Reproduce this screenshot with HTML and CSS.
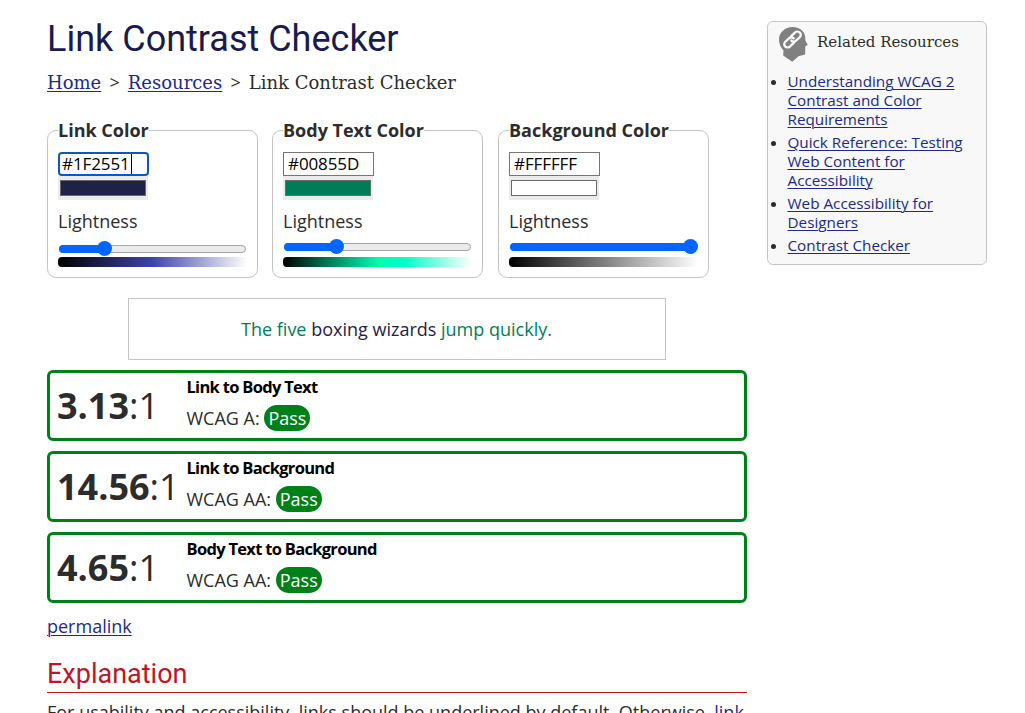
FILE: index.html
```html
<!DOCTYPE html>
<html lang="en">
<head>
<meta charset="utf-8">
<title>Link Contrast Checker</title>
<link rel="stylesheet" href="styles.css">
</head>
<body>
<div class="page">
  <main class="main">
    <h1>Link Contrast Checker</h1>
    <nav class="crumbs"><a href="#">Home</a> <span class="sep">&gt;</span> <a href="#">Resources</a> <span class="sep">&gt;</span> Link Contrast Checker</nav>

    <div class="pickers">
      <fieldset class="picker link">
        <legend>Link Color</legend>
        <div class="hex focused"><span>#1F2551</span><i class="caret"></i></div>
        <div class="well"><div class="swatch"></div></div>
        <div class="label">Lightness</div>
        <div class="slider"><div class="fill"></div><div class="thumb"></div></div>
        <div class="ramp"></div>
      </fieldset>
      <fieldset class="picker text">
        <legend>Body Text Color</legend>
        <div class="hex"><span>#00855D</span></div>
        <div class="well"><div class="swatch"></div></div>
        <div class="label">Lightness</div>
        <div class="slider"><div class="fill"></div><div class="thumb"></div></div>
        <div class="ramp"></div>
      </fieldset>
      <fieldset class="picker back">
        <legend>Background Color</legend>
        <div class="hex"><span>#FFFFFF</span></div>
        <div class="well"><div class="swatch"></div></div>
        <div class="label">Lightness</div>
        <div class="slider"><div class="fill"></div><div class="thumb"></div></div>
        <div class="ramp"></div>
      </fieldset>
    </div>

    <div class="sample"><span>The five <b>boxing wizards</b> jump quickly.</span></div>

    <div class="results">
      <section class="result">
        <div class="ratio"><span><b>3.13</b>:1</span></div>
        <div><h3>Link to Body Text</h3><p>WCAG A: <span class="pass">Pass</span></p></div>
      </section>
      <section class="result">
        <div class="ratio"><span><b>14.56</b>:1</span></div>
        <div><h3>Link to Background</h3><p>WCAG AA: <span class="pass">Pass</span></p></div>
      </section>
      <section class="result">
        <div class="ratio"><span><b>4.65</b>:1</span></div>
        <div><h3>Body Text to Background</h3><p>WCAG AA: <span class="pass">Pass</span></p></div>
      </section>
    </div>

    <div class="perma"><a href="#">permalink</a></div>
    <h2>Explanation</h2>
    <p class="explain">For usability and accessibility, links should be underlined by default. Otherwise, <a href="#">link</a></p>
  </main>

  <aside class="related">
    <div class="related-head">
      <svg width="29" height="35" viewBox="0 0 29 35">
        <path fill="#808080" d="M13.5 0C20 0 25.2 3.600 26.200 9.500L26.400 13.500L28.800 18L26.300 19.300L26.100 27.500L19.500 29.200L13.300 34.700L4.200 28.500L4.500 23.500C1.600 20.500 0 16.500 0 12.500C0 5.500 6 0 13.500 0Z"/>
        <g transform="translate(13.500 12.500) rotate(-43)" fill="none" stroke="#f8f8f8" stroke-width="2.300" stroke-linecap="round">
          <path d="M-1 3.300H-6.800A3.300 3.300 0 0 1 -6.800 -3.300H-1.800A3.300 3.300 0 0 1 1.600 0"/>
          <path d="M1 -3.300H6.800A3.300 3.300 0 0 1 6.800 3.300H1.800A3.300 3.300 0 0 1 -1.600 0"/>
        </g>
      </svg>
      <span>Related Resources</span>
    </div>
    <ul>
      <li><a href="#">Understanding WCAG 2<br>Contrast and Color<br>Requirements</a></li>
      <li><a href="#">Quick Reference: Testing<br>Web Content for<br>Accessibility</a></li>
      <li><a href="#">Web Accessibility for<br>Designers</a></li>
      <li><a href="#">Contrast Checker</a></li>
    </ul>
  </aside>
</div>
</body>
</html>
```
FILE: styles.css
```css
* { box-sizing: border-box; }
body { margin: 0; background: #fff; color: #2c2c2c; font: 18px/24px "Open Sans", sans-serif; height: 713px; overflow: hidden; }
a { color: #1b2a8c; text-decoration-thickness: 1px; text-underline-offset: 2px; }
h1, h2, h3, p { margin: 0; }
.page { display: flex; gap: 20px; padding: 16px 0 0 47px; align-items: flex-start; white-space: nowrap; }
.main { width: 700px; }
h1 { padding-top: 1px; font: 400 36px/44px Roboto, sans-serif; color: #1a1a4e; }
.crumbs { height: 24px; margin-top: 10px; font: 18px/24px "DejaVu Serif", serif; }
.crumbs .sep { margin: 0 2.400px; font-family: "Open Sans", sans-serif; line-height: 18px; }
.pickers { display: flex; gap: 14.500px; margin-top: 25px; }
.picker { width: 211px; height: 158px; margin: 0; padding: 0 10px; border: 1px solid #c4c4c4; border-radius: 9px; min-width: 0; }
.picker.text { margin: 0 .5px 0 -.5px; }
legend { padding: 0; font-weight: 700; line-height: 20px; }
.hex { display: flex; align-items: center; width: 91px; height: 24px; margin-top: 12px; padding-left: 4px; border: 1px solid #767676; font: 17px/20px "Open Sans", sans-serif; letter-spacing: -.1px; color: #000; }
.focused { border: 2px solid #0b57c4; border-radius: 4px; padding-left: 2px; }
.caret { width: 1px; height: 20px; margin-left: 1px; background: #000; }
.well { width: 90px; height: 24px; padding: 4px 2px; background: #ebebeb; }
.swatch { height: 16px; border: 1px solid #6a6a6a; }
.label { margin-top: 9px; line-height: 24px; }
.slider { position: relative; width: 187px; height: 8px; margin: 10px 0 0 1px; border: 1px solid #a5a5a5; border-radius: 4px; background: #ebebeb; }
.fill { height: 8px; margin: -1px; border-radius: 4px; background: #06f; }
.thumb { position: absolute; top: -5px; width: 15px; height: 15px; border-radius: 50%; background: #06f; }
.ramp { height: 10px; margin-top: 6px; border-radius: 4px; }
.link .swatch { background: #1f2147; }
.link .slider { margin-top: 12px; }
.link .ramp { margin-top: 4px; background: linear-gradient(90deg, #000, #3d44a8 50%, #fff); }
.link .fill { width: 45px; }
.link .thumb { left: 37px; }
.text .swatch { background: #007d58; }
.text .ramp { background: linear-gradient(90deg, #000, #00855d 26%, #00ffb2 51%, #00ffc8 64%, #fff); }
.text .fill { width: 52px; }
.text .thumb { left: 44px; }
.back .swatch { background: #fff; }
.back .ramp { background: linear-gradient(90deg, #000, #fff); }
.back .fill { width: 187px; }
.back .thumb { left: 172px; }
.sample { display: flex; align-items: center; justify-content: center; width: 538px; height: 62px; margin: 20px 0 0 81px; padding-right: 1px; border: 1px solid #c4c4c4; color: #007d58; }
.sample b { font-weight: 400; color: #1f2147; }
.results { display: grid; gap: 10px; margin-top: 10px; }
.result { display: flex; height: 71px; border: 3px solid #008018; border-radius: 6px; padding-left: 7px; }
.ratio { width: 129.500px; padding-top: 4px; font-size: 36px; line-height: 57px; }
.result h3 { margin-top: 2px; font: 700 16.500px/24px "Open Sans", sans-serif; letter-spacing: -.7px; color: #000; }
.result p { margin-top: 6px; line-height: 26px; }
.pass { display: inline-block; height: 26px; padding: 0 4px; border-radius: 13px; background: #008018; color: #fff; }
.perma { margin-top: 11px; }
h2 { margin-top: 19px; height: 36px; border-bottom: 1px solid #bf1525; font: 400 27px/34px Roboto, sans-serif; color: #bf1525; }
.explain { margin-top: 7px; }
.explain a { text-decoration: none; }
.related { width: 220px; height: 244px; margin-top: 5px; border: 1px solid #c4c4c4; border-radius: 6px; background: #f8f8f8; font-size: 15.250px; line-height: 19px; }
.related-head { display: flex; gap: 9px; padding: 5px 0 0 11px; font: 15px/30px "DejaVu Serif", serif; }
.related ul { margin: 10px 0 0; padding-left: 19.500px; }
.related li { margin-bottom: 4px; }
```
